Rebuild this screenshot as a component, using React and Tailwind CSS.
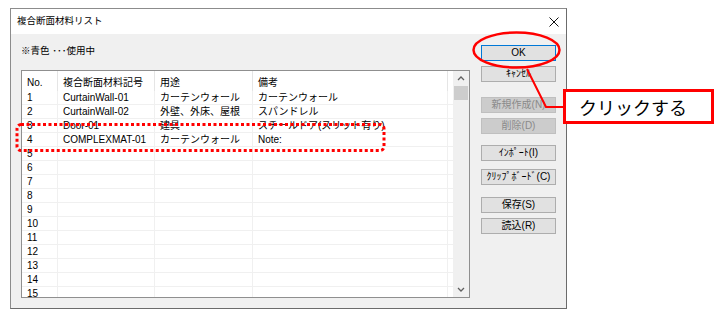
const rows = [
  ['1', 'CurtainWall-01', 'カーテンウォール', 'カーテンウォール'],
  ['2', 'CurtainWall-02', '外壁、外床、屋根', 'スパンドレル'],
  ['3', 'Door-01', '建具', 'スチールドア(スリット有り)'],
  ['4', 'COMPLEXMAT-01', 'カーテンウォール', 'Note:'],
  ...Array.from({ length: 11 }, (_, i) => [String(i + 5), '', '', '']),
];

const font = { fontFamily: '"Liberation Sans", "Noto Sans CJK JP", sans-serif' };

function Btn({ label, variant, className = '' }) {
  const look =
    variant === 'default'
      ? 'bg-[#e1e1e1] border-[#0078d7] text-black'
      : variant === 'disabled'
      ? 'bg-[#cccccc] border-[#bfbfbf] text-[#8a8a8a]'
      : 'bg-[#e1e1e1] border-[#adadad] text-black';
  return (
    <div
      className={`w-[75px] h-[16px] border flex items-center justify-center text-[10px] leading-none ${look} ${className}`}
    >
      {label}
    </div>
  );
}

function Chevron({ down }) {
  return (
    <svg width="8" height="5" viewBox="0 0 8 5" className="block">
      <path
        d={down ? 'M1 1 L4 4 L7 1' : 'M1 4 L4 1 L7 4'}
        fill="none"
        stroke="#606060"
        strokeWidth="1.3"
      />
    </svg>
  );
}

export default function App() {
  return (
    <div className="relative w-[724px] h-[321px] bg-white overflow-hidden" style={font}>
      <div className="pl-[10px] pt-[8px]">
        {/* dialog window */}
        <div className="w-[557px] h-[301px] border border-[#8c8c8c] border-b-[#6b6b6b] border-r-[#6b6b6b] flex flex-col">
          <div className="h-[25px] bg-white flex items-center justify-between pl-[6px] pr-[7px]">
            <span className="text-[9.5px] text-black">複合断面材料リスト</span>
            <svg width="10" height="10" viewBox="0 0 10 10">
              <path d="M0.5 0.5 L9.5 9.5 M9.5 0.5 L0.5 9.5" stroke="#111" strokeWidth="1" />
            </svg>
          </div>

          <div className="flex-1 bg-[#f0f0f0] flex pl-[10px] pt-[11px]">
            <div className="flex flex-col">
              <div className="h-[12px] text-[9.5px] leading-[12px] text-black">※青色 ･･･使用中</div>

              {/* list */}
              <div className="mt-[13px] w-[449px] h-[228px] border border-[#8f8f8f] bg-white flex overflow-hidden">
                <div className="w-[431px] flex flex-col">
                  <div className="h-[20px] flex text-[10px] text-black shrink-0">
                    <div className="w-[36px] border-r border-[#e5e5e5] pl-[5px] pt-[4px]">No.</div>
                    <div className="w-[97px] border-r border-[#e5e5e5] pl-[5px] pt-[4px]">複合断面材料記号</div>
                    <div className="w-[98px] border-r border-[#e5e5e5] pl-[5px] pt-[4px]">用途</div>
                    <div className="w-[195px] border-r border-[#e5e5e5] pl-[5px] pt-[4px]">備考</div>
                    <div className="flex-1" />
                  </div>
                  {rows.map((r) => (
                    <div
                      key={r[0]}
                      className="h-[14px] flex text-[10px] leading-[13px] text-black border-b border-[#f0f0f0] shrink-0"
                    >
                      <div className="w-[36px] border-r border-[#f0f0f0] pl-[5px] whitespace-nowrap">{r[0]}</div>
                      <div className="w-[97px] border-r border-[#f0f0f0] pl-[5px] whitespace-nowrap">{r[1]}</div>
                      <div className="w-[98px] border-r border-[#f0f0f0] pl-[5px] whitespace-nowrap">{r[2]}</div>
                      <div className="w-[195px] border-r border-[#f0f0f0] pl-[5px] whitespace-nowrap">{r[3]}</div>
                      <div className="flex-1" />
                    </div>
                  ))}
                </div>
                {/* scrollbar */}
                <div className="w-[16px] bg-[#f0f0f0] flex flex-col items-center">
                  <div className="h-[15px] flex items-center justify-center">
                    <Chevron />
                  </div>
                  <div className="w-[14px] h-[14px] bg-[#cdcdcd]" />
                  <div className="flex-1" />
                  <div className="h-[16px] flex items-center justify-center">
                    <Chevron down />
                  </div>
                </div>
              </div>
            </div>

            {/* buttons */}
            <div className="ml-[11px] flex flex-col">
              <Btn label="OK" variant="default" />
              <Btn label="ｷｬﾝｾﾙ" className="mt-[5px]" />
              <Btn label="新規作成(N)" variant="disabled" className="mt-[15px]" />
              <Btn label="削除(D)" variant="disabled" className="mt-[5px]" />
              <Btn label="ｲﾝﾎﾟｰﾄ(I)" className="mt-[11px]" />
              <Btn label="ｸﾘｯﾌﾟﾎﾞｰﾄﾞ(C)" className="mt-[8px]" />
              <Btn label="保存(S)" className="mt-[12px]" />
              <Btn label="読込(R)" className="mt-[5px]" />
            </div>
          </div>
        </div>
      </div>

      {/* red annotations */}
      <svg className="absolute left-0 top-0 pointer-events-none" width="724" height="321">
        <ellipse cx="516.5" cy="50" rx="43" ry="17.5" fill="none" stroke="#ff0000" strokeWidth="2.5" />
        <path d="M527 69 L546 107 L564 107" fill="none" stroke="#ff0000" strokeWidth="2" />
        <rect
          x="17"
          y="124.5"
          width="367"
          height="26"
          rx="4"
          fill="none"
          stroke="#ff0000"
          strokeWidth="3"
          strokeDasharray="3 2.5"
        />
      </svg>
      <div className="absolute left-[563px] top-[89px] w-[151px] h-[35px] border-[3px] border-[#ff0000] bg-white flex items-center pl-[13px]">
        <span className="text-[18px] leading-none text-black" style={{ fontFamily: '"Noto Sans CJK JP", sans-serif' }}>
          クリックする
        </span>
      </div>
    </div>
  );
}
